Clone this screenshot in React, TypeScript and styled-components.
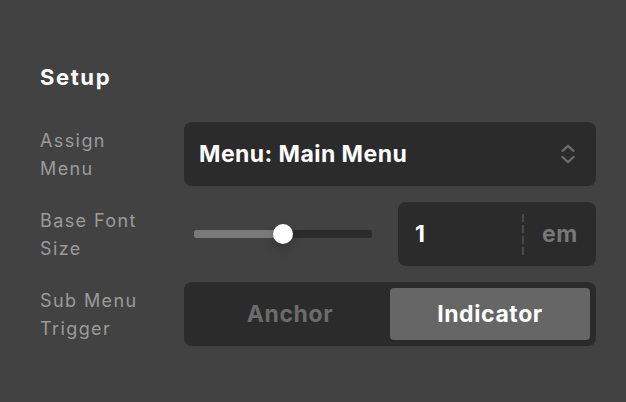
import React, { useState } from "react";
import styled, { createGlobalStyle } from "styled-components";

const Global = createGlobalStyle`
  html, body { margin: 0; padding: 0; background: #424242; }
  body { font-family: Inter, "Noto Sans", sans-serif; -webkit-font-smoothing: antialiased; }
  * { box-sizing: border-box; }
`;

const Panel = styled.div`
  width: 626px;
  height: 402px;
  background: #424242;
  padding: 63px 30px 0 40px;
`;

const Title = styled.h2`
  margin: 0 0 31px;
  font-size: 22px;
  line-height: 28px;
  font-weight: 700;
  color: #ffffff;
  letter-spacing: 1.6px;
`;

const Rows = styled.div`
  display: flex;
  flex-direction: column;
  gap: 16px;
`;

const Row = styled.div`
  display: grid;
  grid-template-columns: 144px 1fr;
  align-items: center;
  height: 64px;
`;

const Label = styled.div`
  font-size: 18px;
  line-height: 28px;
  color: #9b9b9b;
  letter-spacing: 1.4px;
  width: 110px;
  padding-top: 2px;
`;

const Select = styled.div`
  height: 64px;
  background: #2b2b2b;
  border-radius: 8px;
  display: flex;
  align-items: center;
  justify-content: space-between;
  padding: 0 20px 0 15px;
  color: #fff;
  font-size: 23px;
  font-weight: 700;
  letter-spacing: 0.45px;
`;

const Split = styled.div`
  display: flex;
  gap: 16px;
  align-items: center;
`;

const SliderWrap = styled.div`
  flex: 1;
  padding: 0 10px;
  height: 64px;
  display: flex;
  align-items: center;
`;

const Track = styled.div`
  position: relative;
  flex: 1;
  height: 8px;
  border-radius: 2px;
  background: #2b2b2b;
`;

const Fill = styled.div`
  height: 100%;
  border-radius: 2px 0 0 2px;
  background: #7a7a7a;
`;

const Thumb = styled.div`
  position: absolute;
  top: 50%;
  width: 20px;
  height: 20px;
  margin: -10px 0 0 -10px;
  border-radius: 50%;
  background: #ffffff;
  box-shadow: 0 6px 10px rgba(0, 0, 0, 0.18);
`;

const NumBox = styled.div`
  width: 198px;
  height: 64px;
  background: #2b2b2b;
  border-radius: 8px;
  display: flex;
  align-items: center;
`;

const NumValue = styled.div`
  flex: 1;
  padding-left: 17px;
  color: #fff;
  font-size: 23px;
  font-weight: 700;
`;

const Divider = styled.div`
  width: 2px;
  height: 41px;
  background: repeating-linear-gradient(
    to bottom,
    #4a4a4a 0,
    #4a4a4a 8px,
    transparent 8px,
    transparent 11px
  );
`;

const Unit = styled.div`
  width: 72px;
  text-align: center;
  color: #787878;
  font-size: 23px;
  font-weight: 700;
  letter-spacing: 0.6px;
`;

const Segmented = styled.div`
  height: 64px;
  background: #2b2b2b;
  border-radius: 8px;
  padding: 6px;
  display: grid;
  grid-template-columns: 1fr 1fr;
`;

const Segment = styled.button<{ $active?: boolean }>`
  border: 0;
  margin: 0;
  border-radius: 4px;
  font-family: inherit;
  font-size: 23px;
  font-weight: 700;
  letter-spacing: 0.6px;
  background: ${(p) => (p.$active ? "#666666" : "transparent")};
  color: ${(p) => (p.$active ? "#ffffff" : "#6c6c6c")};
  cursor: pointer;
`;

const Chevrons = () => (
  <svg width="16" height="24" viewBox="0 0 16 24" fill="none">
    <path d="M2.5 9 L8 3.8 L13.5 9" stroke="#6b6b6b" strokeWidth="2.4" strokeLinecap="round" strokeLinejoin="round" />
    <path d="M2.5 15 L8 20.2 L13.5 15" stroke="#6b6b6b" strokeWidth="2.4" strokeLinecap="round" strokeLinejoin="round" />
  </svg>
);

export default function App() {
  const [trigger, setTrigger] = useState("Indicator");
  const value = 50;
  return (
    <>
      <Global />
      <Panel>
        <Title>Setup</Title>
        <Rows>
          <Row>
            <Label>Assign Menu</Label>
            <Select>
              <span>Menu: Main Menu</span>
              <Chevrons />
            </Select>
          </Row>
          <Row>
            <Label>Base Font Size</Label>
            <Split>
              <SliderWrap>
                <Track>
                  <Fill style={{ width: `${value}%` }} />
                  <Thumb style={{ left: `${value}%` }} />
                </Track>
              </SliderWrap>
              <NumBox>
                <NumValue>1</NumValue>
                <Divider />
                <Unit>em</Unit>
              </NumBox>
            </Split>
          </Row>
          <Row>
            <Label>Sub Menu Trigger</Label>
            <Segmented>
              {["Anchor", "Indicator"].map((t) => (
                <Segment key={t} $active={trigger === t} onClick={() => setTrigger(t)}>
                  {t}
                </Segment>
              ))}
            </Segmented>
          </Row>
        </Rows>
      </Panel>
    </>
  );
}
